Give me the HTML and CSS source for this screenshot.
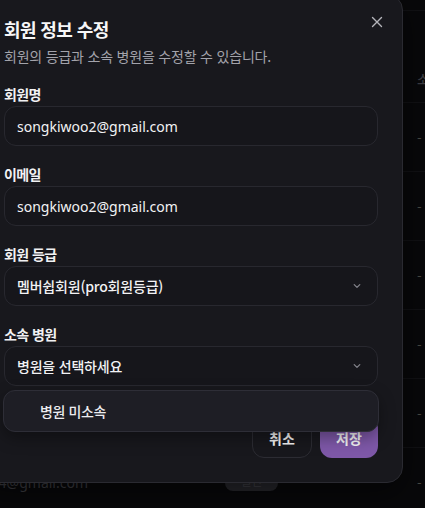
FILE: index.html
```html
<!DOCTYPE html>
<html lang="ko">
<head>
<meta charset="utf-8">
<title>회원 정보 수정</title>
<link rel="stylesheet" href="styles.css">
</head>
<body>
<div class="screen">
  <div class="table">
    <div class="t-top"></div>
    <div class="t-gap"></div>
    <div class="t-head"><span class="c-email"></span><span class="c-name"></span><span class="c-grade"></span><span class="c-hosp head-text">소속 병원</span></div>
    <div class="t-row"><span class="c-email">user1@gmail.com</span><span class="c-name"></span><span class="c-grade"><span class="badge">일반</span></span><span class="c-hosp dash">-</span></div>
    <div class="t-row"><span class="c-email">user2@gmail.com</span><span class="c-name"></span><span class="c-grade"><span class="badge">일반</span></span><span class="c-hosp dash">-</span></div>
    <div class="t-row"><span class="c-email">user3@gmail.com</span><span class="c-name"></span><span class="c-grade"><span class="badge">일반</span></span><span class="c-hosp dash">-</span></div>
    <div class="t-row"><span class="c-email">user5@gmail.com</span><span class="c-name"></span><span class="c-grade"><span class="badge">일반</span></span><span class="c-hosp dash">-</span></div>
    <div class="t-row"><span class="c-email">user6@gmail.com</span><span class="c-name"></span><span class="c-grade"><span class="badge">일반</span></span><span class="c-hosp dash">-</span></div>
    <div class="t-row"><span class="c-email">user4@gmail.com</span><span class="c-name"></span><span class="c-grade"><span class="badge">일반</span></span><span class="c-hosp dash">-</span></div>
  </div>

  <div class="dialog" role="dialog" aria-labelledby="dlg-title">
    <button class="close" aria-label="닫기">
      <svg width="12" height="12" viewBox="0 0 12 12" fill="none" stroke="currentColor" stroke-width="1.4" stroke-linecap="round"><path d="M1.5 1.5l9 9M10.5 1.5l-9 9"/></svg>
    </button>
    <header class="dlg-head">
      <h2 id="dlg-title" class="dlg-title">회원 정보 수정</h2>
      <p class="dlg-desc">회원의 등급과 소속 병원을 수정할 수 있습니다.</p>
    </header>
    <div class="fields">
      <div class="field">
        <label class="label">회원명</label>
        <div class="input">songkiwoo2@gmail.com</div>
      </div>
      <div class="field">
        <label class="label">이메일</label>
        <div class="input">songkiwoo2@gmail.com</div>
      </div>
      <div class="field">
        <label class="label">회원 등급</label>
        <div class="input select"><span>멤버쉽회원(pro회원등급)</span>
          <svg class="chev" width="12" height="12" viewBox="0 0 12 12" fill="none" stroke="currentColor" stroke-width="1.2" stroke-linecap="round" stroke-linejoin="round"><path d="M3.2 4.6l2.8 2.8 2.8-2.8"/></svg>
        </div>
      </div>
      <div class="field">
        <label class="label">소속 병원</label>
        <div class="select-wrap">
          <div class="input select"><span>병원을 선택하세요</span>
            <svg class="chev" width="12" height="12" viewBox="0 0 12 12" fill="none" stroke="currentColor" stroke-width="1.2" stroke-linecap="round" stroke-linejoin="round"><path d="M3.2 4.6l2.8 2.8 2.8-2.8"/></svg>
          </div>
          <div class="listbox" role="listbox">
            <div class="option" role="option">병원 미소속</div>
          </div>
        </div>
      </div>
    </div>
    <footer class="dlg-foot">
      <button class="btn btn-outline">취소</button>
      <button class="btn btn-primary">저장</button>
    </footer>
  </div>
</div>
</body>
</html>
```

FILE: styles.css
```css
* { box-sizing: border-box; }
html, body {
  margin: 0;
  padding: 0;
  background: #08080a;
  overflow: hidden;
}
body {
  width: 425px;
  height: 508px;
  font-family: "Noto Sans", "Noto Sans CJK KR", sans-serif;
  color: #f4f4f5;
}
.screen {
  position: relative;
  width: 425px;
  height: 508px;
  overflow: hidden;
}

/* background table (dimmed by modal backdrop) */
.table {
  display: flex;
  flex-direction: column;
}
.t-top {
  height: 11px;
  border-bottom: 1px solid #111114;
}
.t-gap { height: 43px; }
.t-head, .t-row {
  display: flex;
  align-items: center;
  border-bottom: 1px solid #111114;
}
.t-head > *, .t-row > * { flex-shrink: 0; }
.t-head { height: 49px; }
.t-row { height: 69px; }
.c-email {
  width: 92px;
  display: flex;
  justify-content: flex-end;
  overflow: hidden;
  white-space: nowrap;
  font-size: 14px;
  color: #3b3b40;
  padding-right: 4px;
}
.c-name { width: 133px; }
.c-grade { width: 192px; display: flex; }
.c-hosp {
  white-space: nowrap;
  font-size: 13px;
  font-family: "Noto Sans CJK KR", sans-serif;
}
.head-text { color: #3d3d42; font-weight: 500; }
.dash { color: #4a4a44; }
.badge {
  display: inline-flex;
  align-items: center;
  justify-content: center;
  width: 53px;
  height: 21px;
  border-radius: 8px;
  background: #26262b;
  color: #3e3e44;
  font-size: 12px;
  font-family: "Noto Sans CJK KR", sans-serif;
  margin-top: -3px;
}

/* dialog */
.dialog {
  position: absolute;
  left: -20px;
  top: -6px;
  width: 423px;
  height: 489px;
  background: #18181d;
  border: 1px solid #2a2a31;
  border-radius: 16px;
  padding: 21px 24px 24px 23px;
  display: flex;
  flex-direction: column;
  box-shadow: 0 10px 30px rgba(0,0,0,.5);
}
.close {
  position: absolute;
  top: 21px;
  right: 19px;
  width: 12px;
  height: 12px;
  padding: 0;
  border: 0;
  background: none;
  color: #b4b4ba;
  display: flex;
}
.dlg-head {
  display: flex;
  flex-direction: column;
  gap: 4px;
}
.dlg-title {
  margin: 0;
  font-family: "Noto Sans CJK KR", sans-serif;
  font-size: 18px;
  line-height: 26px;
  font-weight: 700;
  letter-spacing: -0.6px;
  color: #f6f6f7;
}
.dlg-desc {
  margin: 0;
  font-family: "Noto Sans CJK KR", sans-serif;
  font-size: 14px;
  line-height: 20px;
  letter-spacing: -0.2px;
  color: #a3a3ab;
}
.fields {
  display: flex;
  flex-direction: column;
  gap: 18px;
  margin-top: 18px;
}
.field {
  display: flex;
  flex-direction: column;
  gap: 2px;
}
.label {
  font-family: "Noto Sans CJK KR", sans-serif;
  font-size: 14px;
  line-height: 20px;
  font-weight: 700;
  letter-spacing: -0.6px;
  color: #f1f1f3;
}
.input {
  height: 40px;
  border: 1px solid #28282f;
  border-radius: 12px;
  background: #16161b;
  padding: 0 12px;
  display: flex;
  align-items: center;
  font-size: 14px;
  color: #f2f2f4;
}
.select {
  justify-content: space-between;
  font-family: "Noto Sans CJK KR", sans-serif;
  font-size: 14px;
  font-weight: 500;
  letter-spacing: -0.2px;
  padding-right: 14px;
}
.chev { color: #85858d; }
.select-wrap { position: relative; }
.listbox {
  position: absolute;
  left: -1px;
  right: -1px;
  top: 44px;
  height: 42px;
  background: #1e1e25;
  border: 1px solid #2e2e37;
  border-radius: 12px;
  padding: 0 4px;
  display: flex;
  flex-direction: column;
  justify-content: center;
  box-shadow: 0 6px 16px rgba(0,0,0,.35);
  z-index: 2;
}
.option {
  padding-left: 32px;
  font-family: "Noto Sans CJK KR", sans-serif;
  font-size: 14px;
  font-weight: 500;
  letter-spacing: -0.4px;
  color: #ececef;
}
.dlg-foot {
  display: flex;
  justify-content: flex-end;
  gap: 8px;
  margin-top: 31px;
}
.btn {
  height: 41px;
  border-radius: 12px;
  font-family: "Noto Sans CJK KR", sans-serif;
  font-size: 14px;
  font-weight: 700;
  color: #f4f4f5;
  padding: 0;
  display: flex;
  align-items: center;
  justify-content: center;
}
.btn-outline {
  width: 60px;
  background: #18181d;
  border: 1px solid #2c2c33;
}
.btn-primary {
  width: 58px;
  background: #7e58a8;
  border: 0;
}
```
